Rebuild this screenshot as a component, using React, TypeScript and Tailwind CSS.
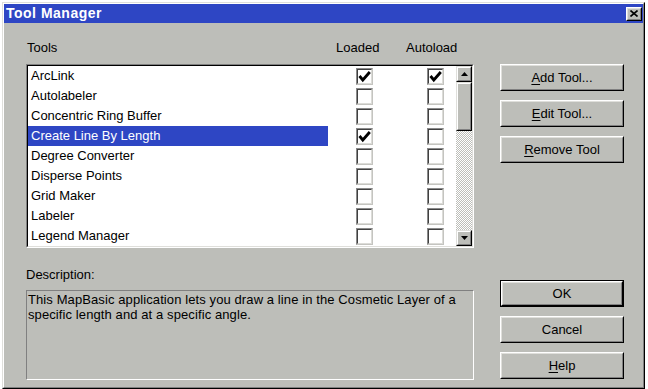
import React from "react";

const tools: { name: string; loaded?: boolean; auto?: boolean }[] = [
  { name: "ArcLink", loaded: true, auto: true },
  { name: "Autolabeler" },
  { name: "Concentric Ring Buffer" },
  { name: "Create Line By Length", loaded: true },
  { name: "Degree Converter" },
  { name: "Disperse Points" },
  { name: "Grid Maker" },
  { name: "Labeler" },
  { name: "Legend Manager" },
];

function Button({ children, isDefault }: { children: React.ReactNode; isDefault?: boolean }) {
  const face = (
    <div className="h-full border border-t-white border-l-white border-b-black border-r-black">
      <div className="flex h-full items-center justify-center border border-t-[#dfdfdb] border-l-[#dfdfdb] border-b-[#808080] border-r-[#808080] text-[13px] leading-[15px] text-black">
        {children}
      </div>
    </div>
  );
  return (
    <div className={`h-[27px] w-[124px] ${isDefault ? "border border-black" : ""}`}>{face}</div>
  );
}

function Check({ on }: { on?: boolean }) {
  return (
    <div className="h-[17px] w-[17px] border border-t-[#8a8a8a] border-l-[#8a8a8a] border-b-[#c4c4c0] border-r-[#c4c4c0]">
      <div className="flex h-full w-full items-center justify-center border border-t-[#404040] border-l-[#404040] border-b-[#dcdcd8] border-r-[#dcdcd8] bg-white">
        {on && (
          <svg width="13" height="13" viewBox="0 0 13 13">
            <polyline points="1.5,6 4.8,10 11.8,2" fill="none" stroke="black" strokeWidth="2.8" />
          </svg>
        )}
      </div>
    </div>
  );
}

function ScrollBtn({ up }: { up?: boolean }) {
  return (
    <div className="h-[16px] w-[16px] border border-t-[#dfdfdb] border-l-[#dfdfdb] border-b-black border-r-black">
      <div className="flex h-full w-full items-center justify-center border border-t-white border-l-white border-b-[#808080] border-r-[#808080] bg-[#bdbeb9]">
        <svg width="7" height="4" viewBox="0 0 7 4">
          <polygon points={up ? "3.5,0 7,4 0,4" : "0,0 7,0 3.5,4"} fill="black" />
        </svg>
      </div>
    </div>
  );
}

export default function App() {
  return (
    <div className="h-[389px] w-[648px] overflow-hidden bg-white font-['Liberation_Sans',Arial,sans-serif]">
      <div className="ml-[2px] mt-[2px] h-[387px] w-[643px] border border-t-[#dfdfdb] border-l-[#dfdfdb] border-b-black border-r-black">
        <div className="flex h-full flex-col border border-t-white border-l-white border-b-[#808080] border-r-[#808080] bg-[#bdbeb9]">
          {/* title bar */}
          <div className="flex h-[19px] items-center justify-between bg-[#2e46c4] pl-[2px] pr-[1px]">
            <span className="text-[14px] font-bold leading-[17px] tracking-[0.5px] text-white">Tool Manager</span>
            <div className="h-[14px] w-[16px] border border-t-white border-l-white border-b-black border-r-black">
              <div className="flex h-full w-full items-center justify-center border border-t-[#dfdfdb] border-l-[#dfdfdb] border-b-[#808080] border-r-[#808080] bg-[#bdbeb9]">
                <svg width="8" height="7" viewBox="0 0 8 7">
                  <path d="M0.5 0.5 L7.5 6.5 M7.5 0.5 L0.5 6.5" stroke="black" strokeWidth="1.6" />
                </svg>
              </div>
            </div>
          </div>

          <div className="flex pl-[22px]">
            {/* left column */}
            <div className="w-[448px]">
              <div className="flex pt-[17px] text-[13px] leading-[15px] text-black">
                <span className="w-[310px] pl-[1px]">Tools</span>
                <span className="w-[70px]">Loaded</span>
                <span>Autoload</span>
              </div>

              <div className="mt-[9px] h-[184px] border border-t-[#808080] border-l-[#808080] border-b-white border-r-white">
                <div className="flex h-full border border-t-black border-l-black border-b-[#dfdfdb] border-r-[#dfdfdb] bg-white">
                  <div className="w-[428px]">
                    {tools.map((t, i) => (
                      <div key={t.name} className="flex h-[20px] items-center">
                        <div
                          className={`h-full w-[300px] pl-[3px] text-[13px] leading-[20px] ${
                            i === 3 ? "bg-[#2e46c4] text-white" : "text-black"
                          }`}
                        >
                          {t.name}
                        </div>
                        <div className="ml-[28px]">
                          <Check on={t.loaded} />
                        </div>
                        <div className="ml-[54px]">
                          <Check on={t.auto} />
                        </div>
                      </div>
                    ))}
                  </div>
                  <div className="flex w-[16px] flex-col">
                    <ScrollBtn up />
                    <div className="h-[49px] w-[16px] border border-t-[#dfdfdb] border-l-[#dfdfdb] border-b-black border-r-black">
                      <div className="h-full w-full border border-t-white border-l-white border-b-[#808080] border-r-[#808080] bg-[#bdbeb9]" />
                    </div>
                    <div className="flex-1 bg-[repeating-conic-gradient(#ffffff_0%_25%,#bdbeb9_0%_50%)] bg-[length:2px_2px]" />
                    <ScrollBtn />
                  </div>
                </div>
              </div>

              <div className="mt-[19px] text-[13px] leading-[15px] text-black">Description:</div>
              <div className="mt-[8px] h-[90px] border border-t-[#808080] border-l-[#808080] border-b-white border-r-white pl-[1px] pt-[1px] text-[13px] leading-[15px] tracking-[0.1px] text-black">
                This MapBasic application lets you draw a line in the Cosmetic Layer of a specific length and at a specific angle.
              </div>
            </div>

            {/* right column */}
            <div className="ml-[26px] flex w-[124px] flex-col pt-[41px]">
              <div className="flex flex-col gap-[9px]">
                <Button>
                  <span><span className="underline underline-offset-2">A</span>dd Tool...</span>
                </Button>
                <Button>
                  <span><span className="underline underline-offset-2">E</span>dit Tool...</span>
                </Button>
                <Button>
                  <span><span className="underline underline-offset-2">R</span>emove Tool</span>
                </Button>
              </div>
              <div className="mt-[117px] flex flex-col gap-[9px]">
                <Button isDefault>OK</Button>
                <Button>Cancel</Button>
                <Button>
                  <span><span className="underline underline-offset-2">H</span>elp</span>
                </Button>
              </div>
            </div>
          </div>
        </div>
      </div>
    </div>
  );
}
